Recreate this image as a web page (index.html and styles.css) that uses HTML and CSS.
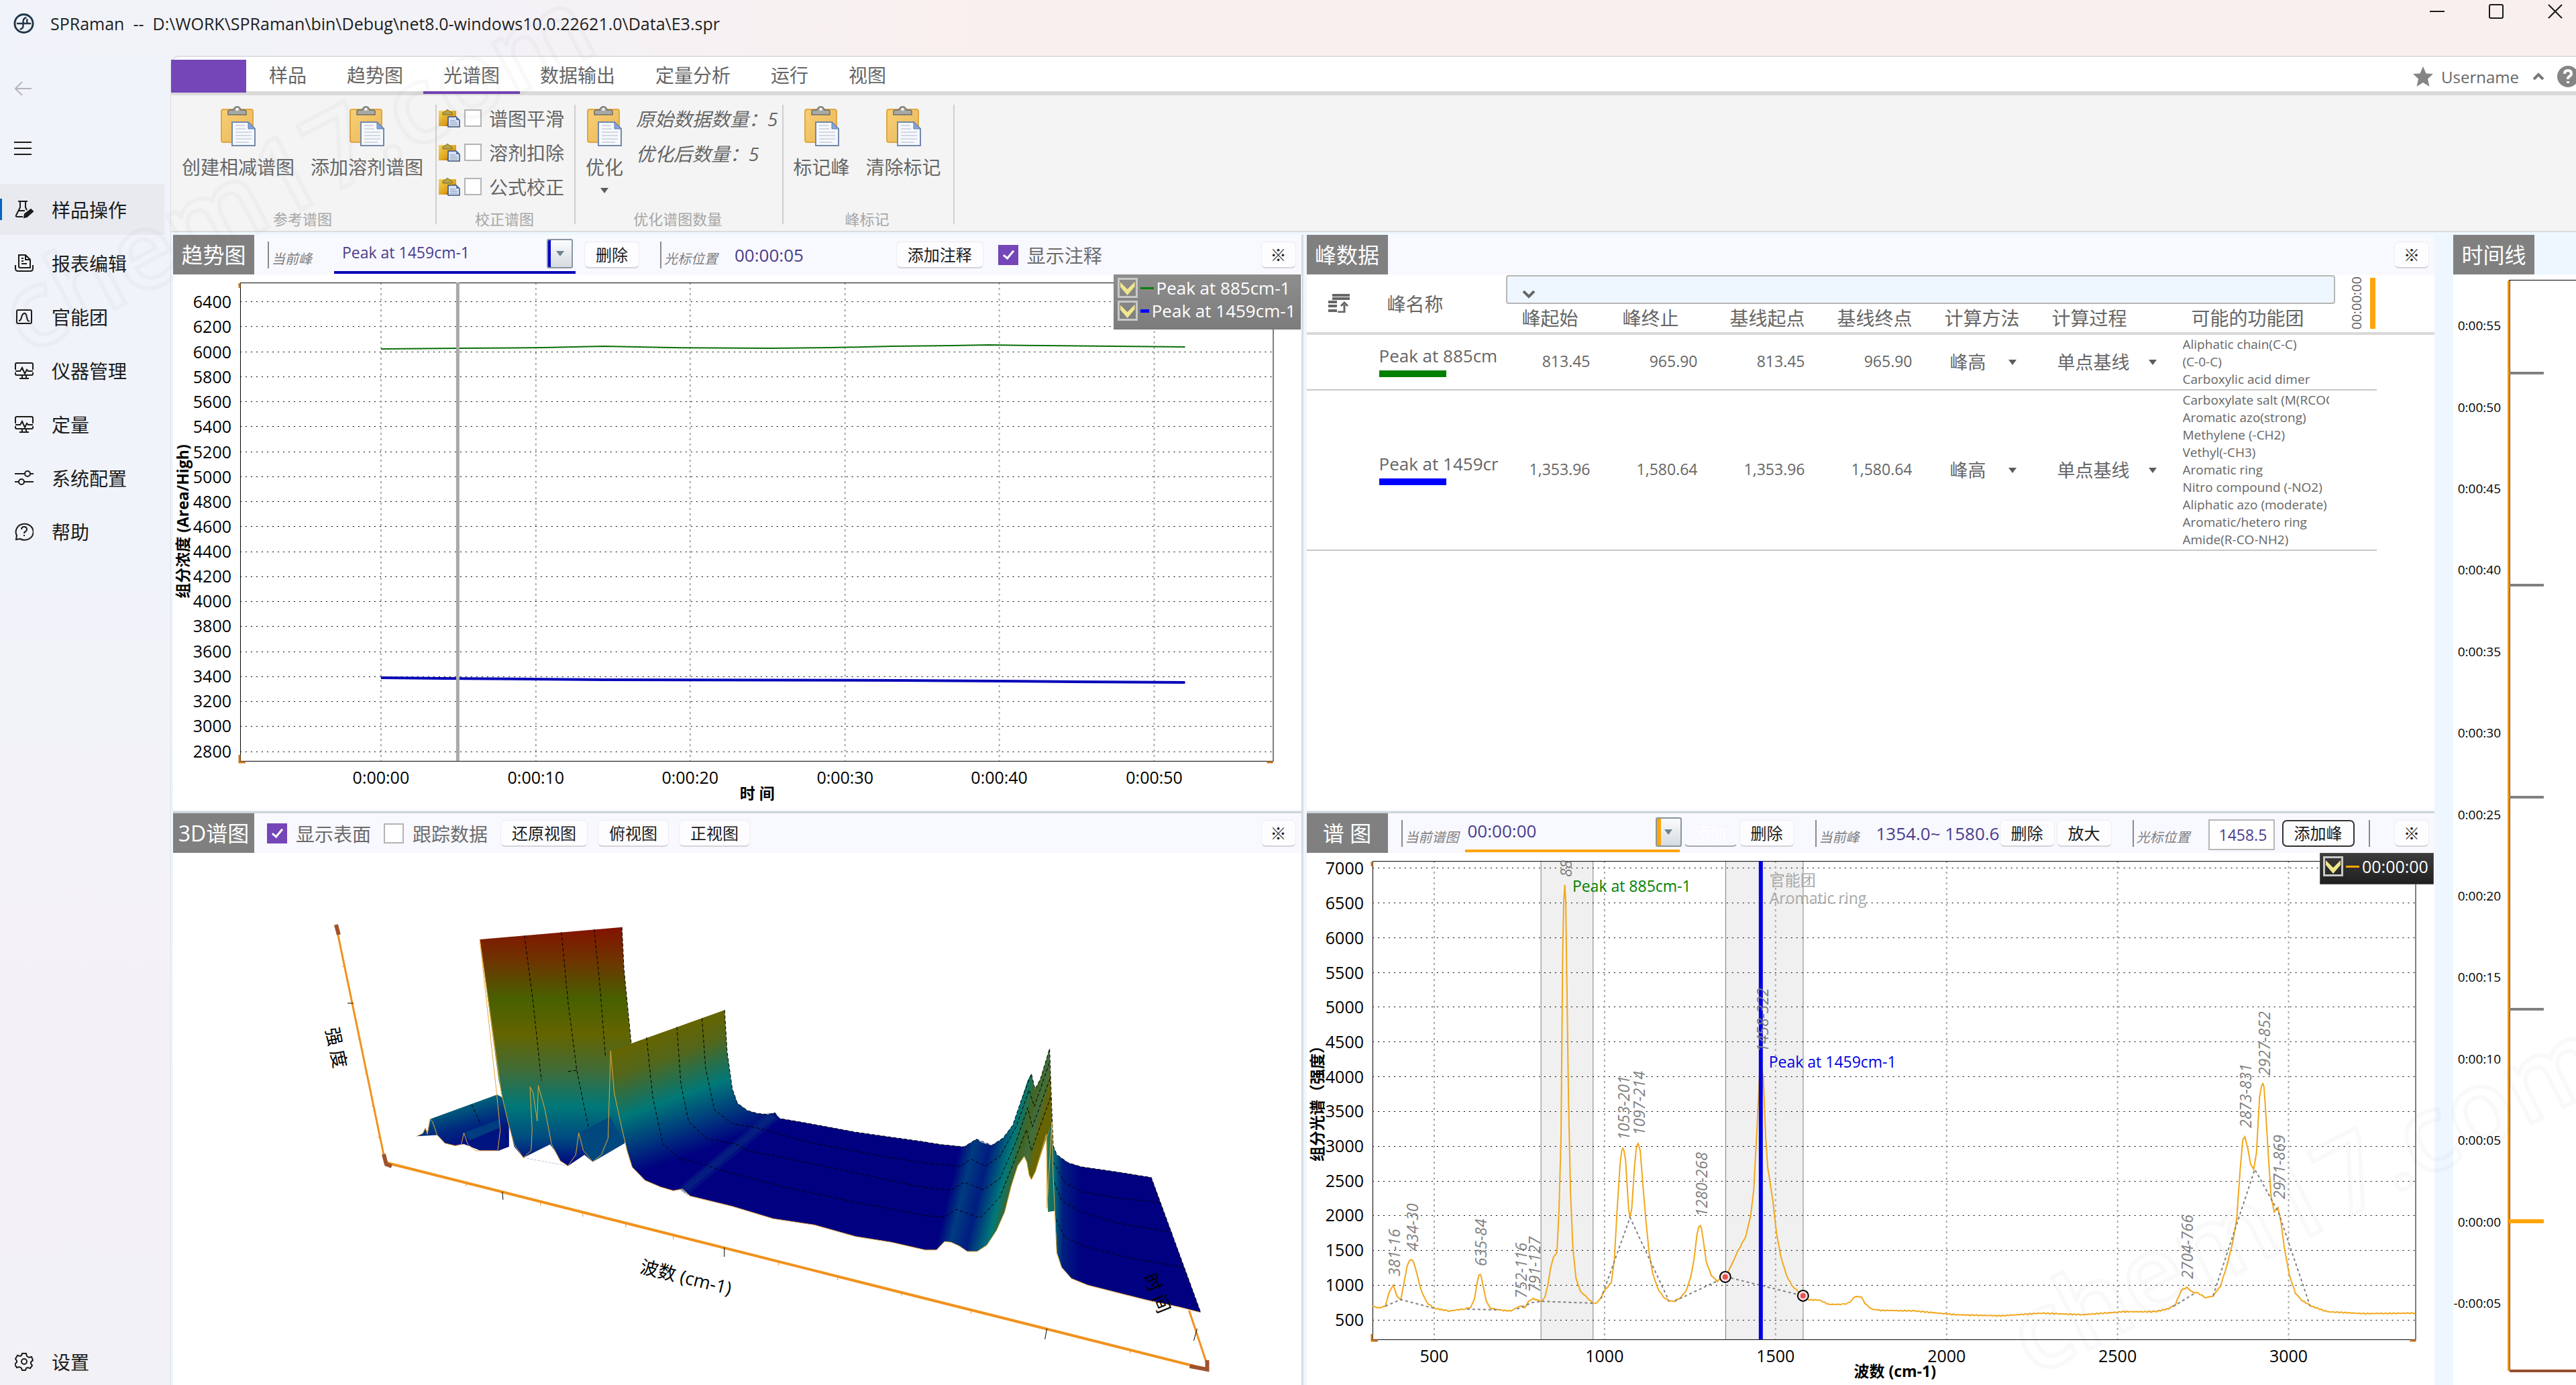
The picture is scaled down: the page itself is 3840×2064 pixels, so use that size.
FILE: index.html
```html
<!DOCTYPE html>
<html lang="zh-CN">
<head>
    <meta charset="UTF-8">
    <meta name="viewport" content="width=device-width, initial-scale=1.0">
    <title>SPRaman</title>
    <link rel="stylesheet" href="styles.css">
</head>
<body>
    <!-- 共用图标 -->
    <svg class="sprite" aria-hidden="true">
        <defs>
            <linearGradient id="boardFill" x1="0" y1="0" x2="1" y2="1">
                <stop offset="0" stop-color="#f9cf74"/>
                <stop offset="1" stop-color="#e9b75a"/>
            </linearGradient>
            <linearGradient id="boardGold" x1="0" y1="0" x2="1" y2="1">
                <stop offset="0" stop-color="#f5d35a"/>
                <stop offset=".6" stop-color="#e0a21a"/>
                <stop offset="1" stop-color="#5a3c08"/>
            </linearGradient>
        </defs>
        <symbol id="clipboard" viewBox="0 0 52 60">
            <rect x="1" y="5" width="47" height="49" rx="3" fill="url(#boardFill)" stroke="#e0a844" stroke-width="2"/>
            <path d="M11 13V8q0-2 3-2h5q1-5 5.500-5t5.500 5h5q3 0 3 2v5z" fill="#a9a9a4" stroke="#6f6f6b" stroke-width="1.500"/>
            <circle cx="24.500" cy="5" r="2" fill="#fff"/>
            <path d="M17 24h24l10 10v25H17z" fill="#f5f8fd" stroke="#7189ab" stroke-width="2"/>
            <path d="M41 24v10h10z" fill="#86a4d6" stroke="#5d7cb0"/>
            <path d="M22 29h14M22 34h15M22 39h24M22 44h24M22 49h24M22 54h20" stroke="#c9cdd8" stroke-width="1.500"/>
        </symbol>
        <symbol id="paste" viewBox="0 0 32 28">
            <rect x="0" y="3" width="26" height="23" fill="url(#boardGold)"/>
            <path d="M6 9V6l4-2q3-5 6 0l4 2v3z" fill="#b5a44a" stroke="#7c6a20"/>
            <path d="M14 12h12l5 5v10H14z" fill="#d6e2f4" stroke="#3d4f70" stroke-width="1.500"/>
            <path d="M26 12v5h5z" fill="#4f76bd"/>
            <path d="M17 18h8M17 21h11M17 24h11" stroke="#7f93b5"/>
        </symbol>
        <symbol id="monitor" viewBox="0 0 28 28">
            <path d="M1 13V5q0-2 2-2h22q2 0 2 2v8M1 17v2q0 2 2 2h22q2 0 2-2v-2M1 15h7l3-5 4 9 3-6 2 2h7M11 21v4M17 21v4M7 26h14"/>
        </symbol>
    </svg>

    <!-- 标题栏 -->
    <header class="titlebar">
        <svg class="app-icon" viewBox="0 0 32 32"><circle cx="16" cy="16" r="14" fill="none" stroke="#223548" stroke-width="3"/><path d="M20 7q-5 1-5 6v6q0 5-5 6M5 16h22M21 9v7" fill="none" stroke="#223548" stroke-width="2.500"/></svg>
        <span class="app-title">SPRaman&nbsp; --&nbsp; D:\WORK\SPRaman\bin\Debug\net8.0-windows10.0.22621.0\Data\E3.spr</span>
        <div class="window-buttons">
            <button type="button" aria-label="最小化"><svg viewBox="0 0 22 22"><path d="M0 11h22"/></svg></button>
            <button type="button" aria-label="最大化"><svg viewBox="0 0 22 22"><rect x="1" y="1" width="20" height="20" rx="2"/></svg></button>
            <button type="button" aria-label="关闭"><svg viewBox="0 0 22 22"><path d="M1 1l20 20M21 1L1 21"/></svg></button>
        </div>
    </header>

    <div class="shell">
        <!-- 左侧导航 -->
        <nav class="sidebar">
            <button type="button" class="side-button back" aria-label="返回"><svg viewBox="0 0 28 28"><path d="M26 14H2M12 4L2 14l10 10"/></svg></button>
            <button type="button" class="side-button menu" aria-label="菜单"><svg viewBox="0 0 28 28"><path d="M0 5h26M0 14h26M0 23h26"/></svg></button>
            <a href="#" class="nav-item active">
                <svg viewBox="0 0 28 28"><path d="M5 2h14M8 2v9L2 23q-1 2 2 2h8M16 2v9l2 4M6 16h9"/><path d="M14 26l1-5 9-7 3 3-9 8z" fill="#1b1b1b"/></svg>
                <span>样品操作</span>
            </a>
            <a href="#" class="nav-item">
                <svg viewBox="0 0 28 28"><path d="M6 2h10l7 7v12H8q-2 0-2-2zM16 2v7h7M1 17v5q0 4 4 4h18q4 0 4-4v-5M10 7h3M10 11h3M10 15h8"/></svg>
                <span>报表编辑</span>
            </a>
            <a href="#" class="nav-item">
                <svg viewBox="0 0 28 28"><rect x="3" y="4" width="22" height="20" rx="2"/><path d="M6 20q3 0 4-5t4-6 4 6 4 5"/></svg>
                <span>官能团</span>
            </a>
            <a href="#" class="nav-item"><svg viewBox="0 0 28 28"><use href="#monitor"/></svg><span>仪器管理</span></a>
            <a href="#" class="nav-item"><svg viewBox="0 0 28 28"><use href="#monitor"/></svg><span>定量</span></a>
            <a href="#" class="nav-item">
                <svg viewBox="0 0 28 28"><path d="M0 8h15M23 8h5M0 20h6M14 20h14"/><circle cx="19" cy="8" r="4"/><circle cx="10" cy="20" r="4"/></svg>
                <span>系统配置</span>
            </a>
            <a href="#" class="nav-item">
                <svg viewBox="0 0 28 28"><path d="M3 20A13 12 0 1 1 8 25l-6 1z"/><path d="M10 11q0-4 4-4t4 4q0 2-2 3t-2 3M14 19v2"/></svg>
                <span>帮助</span>
            </a>
            <a href="#" class="nav-item nav-bottom">
                <svg viewBox="0 0 28 28"><circle cx="14" cy="14" r="4"/><path d="M11 2h6l1 4 3 2 4-1 2 5-3 3v2l2 3-3 4-4-1-2 1-1 3h-5l-1-3-3-2-4 1-3-5 3-3v-2l-2-3 3-5 4 1 2-1z"/></svg>
                <span>设置</span>
            </a>
        </nav>

        <main class="main">
            <!-- 功能区标签 -->
            <div class="tabs">
                <button type="button" class="file-tab" aria-label="文件"></button>
                <button type="button" class="tab">样品</button>
                <button type="button" class="tab">趋势图</button>
                <button type="button" class="tab active">光谱图</button>
                <button type="button" class="tab">数据输出</button>
                <button type="button" class="tab">定量分析</button>
                <button type="button" class="tab">运行</button>
                <button type="button" class="tab">视图</button>
                <div class="account">
                    <svg class="star" viewBox="0 0 30 30"><path d="M15 0l4.500 10.500L30 11l-8 7.500L24.500 30 15 24l-9.500 6L8 18.500 0 11l10.500-.5z" fill="#858585"/></svg>
                    <span>Username</span>
                    <svg class="chevron" viewBox="0 0 16 12"><path d="M1 10l7-7 7 7" fill="none" stroke="#777" stroke-width="4"/></svg>
                    <svg class="help" viewBox="0 0 32 32"><circle cx="16" cy="16" r="16" fill="#858585"/><path d="M11 12q0-5 5-5t5 5q0 2-3 4-2 1-2 4M16 23v3" fill="none" stroke="#fff" stroke-width="4"/></svg>
                </div>
            </div>

            <!-- 功能区 -->
            <div class="ribbon">
                <section class="group">
                    <div class="group-body">
                        <button type="button" class="big-button"><svg><use href="#clipboard"/></svg>创建相减谱图</button>
                        <button type="button" class="big-button"><svg><use href="#clipboard"/></svg>添加溶剂谱图</button>
                    </div>
                    <h2>参考谱图</h2>
                </section>
                <section class="group">
                    <div class="group-body group-checks">
                        <label class="check-row"><svg><use href="#paste"/></svg><input type="checkbox">谱图平滑</label>
                        <label class="check-row"><svg><use href="#paste"/></svg><input type="checkbox">溶剂扣除</label>
                        <label class="check-row"><svg><use href="#paste"/></svg><input type="checkbox">公式校正</label>
                    </div>
                    <h2>校正谱图</h2>
                </section>
                <section class="group">
                    <div class="group-body">
                        <button type="button" class="big-button"><svg><use href="#clipboard"/></svg>优化<i class="caret"></i></button>
                        <div class="counts">
                            <p>原始数据数量<span class="colon">：</span>5</p>
                            <p>优化后数量<span class="colon">：</span>5</p>
                        </div>
                    </div>
                    <h2>优化谱图数量</h2>
                </section>
                <section class="group">
                    <div class="group-body">
                        <button type="button" class="big-button"><svg><use href="#clipboard"/></svg>标记峰</button>
                        <button type="button" class="big-button"><svg><use href="#clipboard"/></svg>清除标记</button>
                    </div>
                    <h2>峰标记</h2>
                </section>
            </div>

            <!-- 工作区 -->
            <div class="workspace">
                <div class="column">
                    <section class="pane pane-top">
                        <header class="pane-header">
                            <h3>趋势图</h3>
                            <label class="field" for="trendPeak">当前峰</label>
                            <div class="combo combo-blue">
                                <select id="trendPeak"><option>Peak at 1459cm-1</option><option>Peak at 885cm-1</option></select>
                                <span class="combo-arrow"><i class="caret"></i></span>
                            </div>
                            <button type="button" class="button">删除</button>
                            <span class="field">光标位置</span>
                            <span class="value">00:00:05</span>
                            <button type="button" class="button note-button">添加注释</button>
                            <label class="check"><input type="checkbox" checked>显示注释</label>
                            <button type="button" class="button close">※</button>
                        </header>
                        <div class="pane-body">
                            <svg id="trendChart" class="chart" viewBox="258 409 1682 798"></svg>
                            <div class="legend legend-gray">
                                <label><input type="checkbox" checked><i class="key key-green"></i>Peak at 885cm-1</label>
                                <label><input type="checkbox" checked><i class="key key-blue"></i>Peak at 1459cm-1</label>
                            </div>
                        </div>
                    </section>
                    <div class="split-h"></div>
                    <section class="pane pane-bottom">
                        <header class="pane-header">
                            <h3>3D谱图</h3>
                            <label class="check"><input type="checkbox" checked>显示表面</label>
                            <label class="check"><input type="checkbox">跟踪数据</label>
                            <div class="view-buttons">
                                <button type="button" class="button">还原视图</button>
                                <button type="button" class="button">俯视图</button>
                                <button type="button" class="button">正视图</button>
                            </div>
                            <button type="button" class="button close">※</button>
                        </header>
                        <div class="pane-body">
                            <svg id="surface" class="chart" viewBox="258 1271 1682 793">
                                <defs>
                                    <linearGradient id="wall" gradientUnits="userSpaceOnUse" x1="0" y1="458" x2="0" y2="1037">
                                        <stop offset="0" stop-color="#841200"/><stop offset=".14" stop-color="#6e3400"/>
                                        <stop offset=".3" stop-color="#486000"/><stop offset=".45" stop-color="#646400"/>
                                        <stop offset=".6" stop-color="#406c38"/><stop offset=".75" stop-color="#007878"/>
                                        <stop offset=".88" stop-color="#004c80"/><stop offset="1" stop-color="#000480"/>
                                    </linearGradient>
                                    <linearGradient id="foot" gradientUnits="userSpaceOnUse" x1="560" y1="880" x2="600" y2="1000">
                                        <stop offset="0" stop-color="#007078"/><stop offset=".5" stop-color="#002a80"/><stop offset="1" stop-color="#000080"/>
                                    </linearGradient>
                                    <linearGradient id="ridge" gradientUnits="userSpaceOnUse" x1="863" y1="758" x2="985" y2="1032">
                                        <stop offset="0" stop-color="#666400"/><stop offset=".2" stop-color="#54661a"/>
                                        <stop offset=".52" stop-color="#007878"/><stop offset=".98" stop-color="#000080"/>
                                    </linearGradient>
                                    <linearGradient id="peaks" gradientUnits="userSpaceOnUse" x1="455" y1="1000" x2="687" y2="1062">
                                        <stop offset="0" stop-color="#000080"/><stop offset=".17" stop-color="#003c80"/>
                                        <stop offset=".38" stop-color="#001c80"/><stop offset=".64" stop-color="#007878"/>
                                        <stop offset=".78" stop-color="#466420"/><stop offset=".86" stop-color="#3f6e40"/><stop offset=".97" stop-color="#686400"/>
                                    </linearGradient>
                                    <linearGradient id="tail" gradientUnits="userSpaceOnUse" x1="745" y1="0" x2="850" y2="0">
                                        <stop offset="0" stop-color="#287850"/><stop offset=".22" stop-color="#006c78"/>
                                        <stop offset=".45" stop-color="#002080"/><stop offset="1" stop-color="#000080"/>
                                    </linearGradient>
                                </defs>
                                <!-- 坐标轴 -->
                                <g class="axis3d">
                                    <path d="M501 1379L575 1735" stroke-width="3"/>
                                    <path d="M577 1733L1200 1890L1801 2041" stroke-width="4"/>
                                    <path d="M1773 1953L1801 2037" stroke-width="3"/>
                                    <path d="M514 1440h-4M538 1549h-4M548 1600h-4M558 1648h-4M567 1695h-4M695 1763v5M806 1792v5M869 1808v5M933 1824v5M1004 1842v5M1161 1881v5M1249 1903v5M1344 1926v5M1448 1953v5M1685 2012v5" stroke-width="1"/>
                                </g>
                                <path class="caps" d="M501 1378l4 15M572 1720l4 15 8 3M1774 2036l26 5 0-14"/>
                                <path class="ticks" d="M518 1495h9M749 1776l1 12M1080 1859v14M1561 1980l-3 16M1785 1980l-5 18"/>
                                <!-- 曲面左半部分 -->
                                <g transform="translate(250 1100) scale(.7653 .6148)">
                                    <path d="M485 965L497 958 502 945 506 955 512 923 642 864 665 880 665 990 645 1000 610 1000 590 990 577 984 560 988 540 982 525 962z" fill="url(#foot)"/>
                                    <path d="M577 957L646 924 665 985 645 1000 610 1000 590 990z" fill="#001480"/>
                                    <path d="M577 957L646 924V945L588 975z" fill="#003c80"/>
                                    <path d="M608 488L885 458 889 560 903 738V800L890 985 828 1027 780 1037 693 1017 675 990 663 930 645 830z" fill="url(#wall)"/>
                                    <path d="M693 1017L745 985 760 1010 780 1037z" fill="#fff"/>
                                    <path d="M722 842L862 773V918L801 957 795 1010 780 1037 765 1025 748 985z" fill="url(#wall)"/>
                                    <path d="M780 1037L812 1010 828 1027 890 982 902 1040 840 1040z" fill="#fff"/>
                                    <path d="M801 957L862 918 890 982 828 1027 815 1010z" fill="#00487e"/>
                                    <path d="M863 758L1085 659 1090 760 1100 850 1110 885 1130 903 1150 910 1170 912 1183 908 1192 922 1240 932 1340 955 1477 979V1241L1410 1222 1340 1208 1260 1180 1180 1165 1100 1135 1018 1110 1003 1093 985 1097 960 1088 930 1072 905 1040 895 1000 882 930 870 860z" fill="url(#ridge)"/>
                                    <g fill="none" stroke="#0a3a80">
                                        <path d="M1003 1100L1180 916" stroke-width="26" opacity=".25"/>
                                        <path d="M1003 1098L1181 914" stroke-width="14" opacity=".3"/>
                                    </g>
                                    <g class="contour">
                                        <path d="M695 478L712 640 728 830M767 470L780 640 797 805 820 945M831 463L842 600 853 775M780 808L797 805M592 888L610 936M885 458L889 560 903 738"/>
                                        <path d="M933 725L945 870 965 985 1000 1020 1050 1035 1070 1045 1200 1088 1340 1125 1477 1157"/>
                                        <path d="M992 700L1000 840 1015 930 1050 970 1110 985 1130 1000 1250 1030 1400 1070 1477 1090"/>
                                        <path d="M1041 679L1048 800 1065 900 1100 935 1150 945 1250 980 1400 1015 1477 1030"/>
                                        <path d="M1085 659L1090 760 1100 850 1110 885 1130 903 1150 910 1170 912 1183 908 1192 922 1240 932 1340 955 1477 979"/>
                                    </g>
                                    <path class="front" d="M485 965L497 958 502 945 506 960 511 923 516 930 525 962 540 982 560 988 572 985 577 957 585 985 600 1000 643 1000 648 950 640 850 608 488 650 860 663 930 675 985 693 1017 708 1000 710 950 706 845 712 860 720 928 722 842 735 900 748 985 765 1025 780 1037 795 1010 801 957 810 1000 828 1027 845 1010 858 970 863 758 870 860 882 930 895 1000 905 1040 930 1072 960 1088 985 1097 1003 1093 1018 1110 1100 1135 1180 1165 1260 1180 1340 1208 1410 1222 1477 1241"/>
                                </g>
                                <!-- 曲面右半部分 -->
                                <g transform="translate(1200 1200) scale(.4847 .551)">
                                    <path d="M370 911L420 918 490 924 515 910 528 903 545 912 575 920 610 900 640 865 665 800 685 745 697 726 708 768 725 740 753 658 761 860 743 900 710 990 697 1013 690 1000 683 965 675 950 655 975 635 1030 615 1100 590 1150 560 1190 530 1207 500 1207 475 1192 450 1182 430 1180 405 1203 370 1203z" fill="url(#peaks)"/>
                                    <path d="M761 857L764 920 775 945 810 967 850 978 960 992 1066 1007 1218 1372 1150 1357 1050 1338 960 1318 870 1298 820 1280 790 1250 775 1210 770 1097 748 1100 744 900z" fill="url(#tail)"/>
                                    <g class="contour">
                                        <path d="M370 911L420 918 490 924 528 903 575 920 610 900 640 865 665 800 697 726 708 768 725 740 753 658 758 780 764 920 775 945 810 967 850 978 960 992 1066 1007 1218 1372"/>
                                        <path d="M370 968L480 977 510 957 555 976 600 950 650 870 690 770 706 815 753 695M764 965L800 1020 850 1045 960 1062 1093 1075"/>
                                        <path d="M370 1035L450 1041 490 1020 550 1040 600 1010 650 910 686 818 700 870 754 740M768 1020L790 1070 850 1100 960 1130 1130 1155"/>
                                        <path d="M370 1110L430 1114 465 1093 540 1116 600 1060 650 950 682 877 697 935 756 790M773 1120L800 1170 870 1195 1000 1225 1168 1250"/>
                                    </g>
                                    <path class="front" d="M370 1203L405 1203 430 1180 450 1182 475 1192 500 1207 530 1207 560 1190 590 1150 615 1100 635 1030 655 975 675 950 683 965 690 1000 697 1013 710 990 743 890 745 1090 760 857 764 1000 770 1120 775 1210 790 1250 820 1280 870 1298 960 1318 1050 1338 1150 1357 1218 1372"/>
                                </g>
                                <text class="label3d" transform="translate(502 1561) rotate(78)">强 度</text>
                                <text class="label3d" transform="translate(1023 1903) rotate(14)">波数 (cm-1)</text>
                                <text class="label3d" transform="translate(1726 1927) rotate(68)">时 间</text>
                            </svg>
                        </div>
                    </section>
                </div>

                <div class="split-v"></div>

                <div class="column">
                    <section class="pane pane-top">
                        <header class="pane-header">
                            <h3>峰数据</h3>
                            <button type="button" class="button close">※</button>
                        </header>
                        <div class="pane-body">
                            <table class="peaks">
                                <colgroup>
                                    <col class="c-mark"><col class="c-name"><col class="c-num"><col class="c-num"><col class="c-num"><col class="c-num"><col class="c-num"><col class="c-process"><col class="c-group"><col class="c-time"><col>
                                </colgroup>
                                <thead>
                                    <tr class="filter-row">
                                        <th rowspan="2"><svg class="sort-icon" viewBox="0 0 32 28"><path d="M6 2h26M6 7h26M0 12h13M0 18h13M0 25h13" stroke="#666" stroke-width="4"/><path d="M14 27h10V16M19 18l5-5 5 5" fill="none" stroke="#666" stroke-width="3"/></svg></th>
                                        <th rowspan="2" class="name-head">峰名称</th>
                                        <th colspan="7"><button type="button" class="filter-box" aria-label="筛选"><svg viewBox="0 0 20 12"><path d="M2 1l8 8 8-8" fill="none" stroke="#666" stroke-width="4"/></svg></button></th>
                                        <th rowspan="2"><div class="time-head"><span>00:00:00</span></div></th>
                                        <th rowspan="2"></th>
                                    </tr>
                                    <tr class="head-row">
                                        <th class="first">峰起始</th><th>峰终止</th><th>基线起点</th><th>基线终点</th><th>计算方法</th><th>计算过程</th><th class="group-head">可能的功能团</th>
                                    </tr>
                                </thead>
                                <tbody>
                                    <tr>
                                        <td></td>
                                        <td class="name"><span>Peak at 885cm-1</span><i class="swatch key-green"></i></td>
                                        <td class="num">813.45</td><td class="num">965.90</td><td class="num">813.45</td><td class="num">965.90</td>
                                        <td><div class="pick"><select aria-label="计算方法"><option>峰高</option></select><i class="caret"></i></div></td>
                                        <td><div class="pick pick-wide"><select aria-label="计算过程"><option>单点基线</option></select><i class="caret"></i></div></td>
                                        <td class="groups"><div>Aliphatic chain(C-C)<br>(C-0-C)<br>Carboxylic acid dimer</div></td>
                                        <td></td><td class="rest"></td>
                                    </tr>
                                    <tr>
                                        <td></td>
                                        <td class="name"><span>Peak at 1459cm-1</span><i class="swatch key-blue"></i></td>
                                        <td class="num">1,353.96</td><td class="num">1,580.64</td><td class="num">1,353.96</td><td class="num">1,580.64</td>
                                        <td><div class="pick"><select aria-label="计算方法"><option>峰高</option></select><i class="caret"></i></div></td>
                                        <td><div class="pick pick-wide"><select aria-label="计算过程"><option>单点基线</option></select><i class="caret"></i></div></td>
                                        <td class="groups"><div>Carboxylate salt (M(RCOO)<br>Aromatic azo(strong)<br>Methylene (-CH2)<br>Vethyl(-CH3)<br>Aromatic ring<br>Nitro compound (-NO2)<br>Aliphatic azo (moderate)<br>Aromatic/hetero ring<br>Amide(R-CO-NH2)</div></td>
                                        <td></td><td class="rest"></td>
                                    </tr>
                                </tbody>
                            </table>
                        </div>
                    </section>
                    <div class="split-h"></div>
                    <section class="pane pane-bottom">
                        <header class="pane-header">
                            <h3>谱 图</h3>
                            <label class="field" for="spectrum">当前谱图</label>
                            <div class="combo combo-orange">
                                <select id="spectrum"><option>00:00:00</option></select>
                                <span class="combo-arrow"><i class="caret"></i></span>
                            </div>
                            <button type="button" class="button ghost" disabled>添加</button>
                            <button type="button" class="button ghost-next">删除</button>
                            <span class="field">当前峰</span>
                            <span class="value range">1354.0~ 1580.6</span>
                            <button type="button" class="button tight">删除</button>
                            <button type="button" class="button tight">放大</button>
                            <label class="field" for="cursorPos">光标位置</label>
                            <input type="text" id="cursorPos" class="text-box" value="1458.5">
                            <button type="button" class="button add-peak">添加峰</button>
                            <span class="field field-end"></span>
                            <button type="button" class="button close">※</button>
                        </header>
                        <div class="pane-body">
                            <svg id="spectrumChart" class="chart" viewBox="1948 1271 1682 793"></svg>
                            <div class="legend legend-dark">
                                <label><input type="checkbox" checked><i class="key key-orange"></i>00:00:00</label>
                            </div>
                        </div>
                    </section>
                </div>

                <section class="pane timeline">
                    <header class="pane-header"><h3>时间线</h3></header>
                    <div class="pane-body">
                        <svg id="timeline" class="chart" viewBox="3657 409 183 1655"></svg>
                    </div>
                </section>
            </div>
        </main>
    </div>

    <!-- 水印 -->
    <svg class="watermark" viewBox="0 0 3840 2064" aria-hidden="true">
        <text transform="translate(40 530) rotate(-28)">chem17.com</text>
        <text transform="translate(3032 2052) rotate(-27)">chem17.com</text>
    </svg>

    <script src="script.js"></script>
</body>
</html>
```
FILE: styles.css
```css
* {
    margin: 0;
    padding: 0;
    box-sizing: border-box;
}

html,
body {
    height: 100%;
}

body {
    display: flex;
    flex-direction: column;
    overflow: hidden;
    background: linear-gradient(to right, #f0f3f9 0%, #f3f2f7 18%, #f9f0ee 38%);
    font-family: "Open Sans", "Noto Sans CJK SC", sans-serif;
    font-size: 28px;
    color: #666;
}

button,
input,
select {
    font: inherit;
    color: inherit;
    border: none;
    background: none;
}

select {
    appearance: none;
}

.sprite {
    position: absolute;
    width: 0;
    height: 0;
}

/* 标题栏 */
.titlebar {
    display: flex;
    flex: none;
    height: 83px;
    padding: 0 20px 0 20px;
    color: #1f1f1f;
    font-size: 25px;
}

.app-icon {
    width: 31px;
    height: 32px;
    margin: 19px 24px 0 0;
}

.app-title {
    line-height: 70px;
}

.window-buttons {
    display: flex;
    gap: 66px;
    margin-left: auto;
    padding-top: 6px;
}

.window-buttons button {
    width: 22px;
    height: 22px;
}

.window-buttons svg {
    display: block;
    fill: none;
    stroke: #1a1a1a;
    stroke-width: 2;
}

/* 左侧导航 */
.shell {
    display: flex;
    flex: 1;
    min-height: 0;
}

.sidebar {
    display: flex;
    flex-direction: column;
    flex: none;
    width: 254px;
    padding-top: 9px;
    background: linear-gradient(#f0f3f9, #f0f3f9 40%, #f4f1f6 70%, #f2f1f6);
}

.sidebar svg {
    width: 28px;
    height: 28px;
    fill: none;
    stroke: #1b1b1b;
    stroke-width: 2;
}

.side-button {
    height: 80px;
    padding-left: 21px;
    text-align: left;
}

.side-button svg {
    display: block;
}

.side-button.back svg {
    stroke: #b4b6bb;
}

.side-button.menu {
    margin: 9px 0 13px;
}

.nav-item {
    display: flex;
    align-items: center;
    gap: 27px;
    width: 245px;
    height: 76px;
    margin-bottom: 4px;
    padding-left: 22px;
    color: #1b1b1b;
    text-decoration: none;
}

.nav-item.active {
    position: relative;
    background: #e8eaf0;
}

.nav-item.active::before {
    content: "";
    position: absolute;
    left: 0;
    top: 22px;
    width: 3px;
    height: 32px;
    background: #0067c0;
}

.nav-bottom {
    height: 70px;
    margin: auto 0 0;
}

.main {
    display: flex;
    flex-direction: column;
    flex: 1;
    min-width: 0;
    border-left: 1px solid #dcdfe4;
    border-top: 2px solid #dfdfe3;
    border-top-left-radius: 14px;
    background: #fff;
}

/* 功能区标签 */
.tabs {
    display: flex;
    flex: none;
    height: 57px;
    border-bottom: 6px solid #dadada;
}

.file-tab {
    width: 112px;
    height: 49px;
    margin: 4px 4px 0 0;
    background: #7446b8;
    z-index: 1;
}

.tab {
    height: 55px;
    padding: 0 30px;
    line-height: 55px;
    border-bottom: 4px solid transparent;
}

.tab.active {
    border-bottom-color: #6f42b0;
}

.account {
    display: flex;
    align-items: center;
    margin-left: auto;
    margin-right: -4px;
    padding-top: 7px;
    font-size: 24px;
}

.account .star {
    width: 30px;
    height: 30px;
    margin-right: 12px;
}

.account .chevron {
    width: 16px;
    height: 12px;
    margin: 0 20px 0 21px;
}

.account .help {
    width: 32px;
    height: 32px;
}

/* 功能区 */
.ribbon {
    display: flex;
    flex: none;
    height: 204px;
    padding-top: 14px;
    background: #f4f4f4;
    border-bottom: 2px solid #dadce0;
}

.group {
    display: flex;
    flex-direction: column;
    height: 178px;
    padding: 0 6px 0 3px;
    border-right: 2px solid #cfcfcf;
}

.group:first-child {
    padding-left: 4px;
}

.group-body {
    display: flex;
    flex: 1;
}

.group h2 {
    color: #a6a6a6;
    font-size: 22px;
    font-weight: normal;
    line-height: 24px;
    height: 20px;
    text-align: center;
}

.big-button {
    display: flex;
    flex-direction: column;
    align-items: center;
    padding: 2px 12px 0;
    line-height: 62px;
}

.big-button svg {
    width: 52px;
    height: 60px;
    flex: none;
}

.caret {
    display: inline-block;
    flex: none;
    width: 0;
    height: 0;
    border: 6px solid transparent;
    border-top: 8px solid #5c5c5c;
    border-bottom: none;
}

.group-checks {
    flex-direction: column;
    padding-right: 9px;
}

.check-row {
    display: flex;
    align-items: center;
    height: 51px;
    padding-bottom: 12px;
}

.check-row svg {
    width: 32px;
    height: 28px;
    margin-right: 6px;
}

.check-row input {
    appearance: none;
    width: 26px;
    height: 26px;
    margin-right: 11px;
    border: 2px solid #b4b4b4;
    background: #fff;
}

.counts {
    padding-left: 7px;
    font-style: italic;
    line-height: 51px;
    margin-top: -5px;
}

.colon {
    font-family: "Noto Sans CJK TC", sans-serif;
}

/* 工作区 */
.workspace {
    display: flex;
    flex: 1;
    min-height: 0;
    padding: 4px 0 0 3px;
    background: #eef7ff;
}

.column {
    display: flex;
    flex-direction: column;
    flex: 1;
    min-width: 0;
}

.split-v {
    flex: none;
    width: 8px;
    border-left: 3px solid #d8dbdf;
}

.split-h {
    flex: none;
    height: 5px;
    border-bottom: 3px solid #ced3d6;
}

.pane {
    display: flex;
    flex-direction: column;
    min-width: 0;
    min-height: 0;
}

.pane-top {
    flex: 857 1 0;
}

.pane-bottom {
    flex: 852 1 0;
}

.timeline {
    flex: none;
    width: 211px;
    padding-left: 28px;
}

.timeline .pane-header {
    background: #eef7ff;
}

.pane-header {
    display: flex;
    align-items: center;
    flex: none;
    height: 59px;
    background: #f8f8ff;
}

.pane-header h3 {
    flex: none;
    width: 121px;
    height: 59px;
    background: #808080;
    color: #fff;
    font-size: 32px;
    font-weight: normal;
    line-height: 59px;
    text-align: center;
}

.pane-body {
    position: relative;
    flex: 1;
    min-height: 0;
    overflow: hidden;
    background: #fff;
}

.chart {
    display: block;
    width: 100%;
    height: 100%;
}

.field {
    flex: none;
    height: 40px;
    margin-left: 20px;
    padding-left: 4px;
    border-left: 2px solid #8a8a8a;
    color: #808080;
    font-size: 20px;
    font-style: italic;
    line-height: 52px;
    white-space: nowrap;
}

.button + .field {
    margin-left: 31px;
}

.value {
    flex: none;
    margin-left: 25px;
    color: #483d8b;
    font-size: 26px;
    white-space: nowrap;
}

.button {
    flex: none;
    height: 40px;
    padding: 0 16px;
    border: 1px solid #ececf2;
    border-bottom: 2px solid #d4d4da;
    border-radius: 7px;
    background: #fdfdff;
    color: #1b1b1b;
    font-size: 24px;
    line-height: 38px;
    white-space: nowrap;
}

.button.close {
    width: 52px;
    margin: 0 8px 0 auto;
    padding: 0;
}

.note-button {
    margin: 0 22px 0 138px;
}

/* 下拉框 */
.combo {
    display: flex;
    flex: none;
    height: 52px;
    margin-top: 4px;
    border-bottom: 4px solid #0000b8;
}

.combo select {
    flex: 1;
    padding: 0 0 8px 12px;
    color: #483d8b;
    font-size: 23px;
}

.combo .caret {
    border-top-color: #6c8490;
}

.combo-blue {
    width: 360px;
    margin-left: 33px;
    margin-right: 13px;
}

.combo-orange {
    width: 320px;
    margin-left: 9px;
    border-bottom-color: #ffa50a;
}

.combo-orange select {
    padding-left: 4px;
    font-size: 26px;
}

.combo-arrow {
    display: flex;
    align-items: center;
    justify-content: center;
    width: 39px;
    height: 44px;
    margin-right: 4px;
    border: 2px solid #8796a0;
    border-radius: 3px;
    background: linear-gradient(#fbfcfd, #d5dbe0);
    box-shadow: inset 4px 0 #0000c8;
}

.combo-orange .combo-arrow {
    margin-right: -3px;
    box-shadow: inset 6px 0 #ffa50a;
}

/* 复选框 */
.check {
    display: flex;
    align-items: center;
    margin-left: 19px;
    color: #6c6c6c;
}

.note-button + .check {
    margin-left: 0;
}

.check input {
    position: relative;
    appearance: none;
    width: 30px;
    height: 30px;
    margin-right: 13px;
    border: 2px solid #b4b4b4;
    background: #fff;
}

.check input:checked {
    border-color: #7446b8;
    background: #7446b8;
}

.check input:checked::after {
    content: "";
    position: absolute;
    left: 9px;
    top: 3px;
    width: 6px;
    height: 13px;
    border: solid #fff;
    border-width: 0 3px 3px 0;
    transform: rotate(40deg);
}

.view-buttons {
    display: flex;
    gap: 15px;
    margin-left: 19px;
}

/* 谱图工具栏 */
.ghost {
    width: 80px;
    margin-left: 6px;
    padding: 0;
    border-color: #f8f8ff;
    border-bottom-color: #a8a8b0;
    background: none;
    color: #fff;
}

.ghost-next {
    margin-left: 3px;
}

.range {
    width: 184px;
}

.tight {
    margin-right: 3px;
}

.tight + .field {
    margin-left: 28px;
}

.text-box {
    width: 99px;
    height: 46px;
    margin: 4px 11px 0 27px;
    padding-left: 14px;
    border: 2px solid #b8b8b8;
    background: #fff;
    color: #483d8b;
    font-size: 23px;
}

.add-peak {
    border: 2px solid #333;
    line-height: 36px;
}

.button + .field-end {
    margin-left: 21px;
}

/* 图例 */
.legend {
    position: absolute;
    top: 0;
    right: 1px;
    padding: 3px 6px 10px;
    color: #fff;
    font-size: 26px;
}

.legend label {
    display: flex;
    align-items: center;
    height: 34px;
    white-space: nowrap;
}

.legend-gray {
    width: 279px;
    background: linear-gradient(#8e8e8e, #7c7c7c);
    border: solid #707070;
    border-width: 0 1px 1px 0;
}

.legend-dark {
    width: 170px;
    padding: 2px 4px 9px;
    background: linear-gradient(#3c3c3c, #202020);
    border: 1px solid #555;
    font-size: 25px;
}

.legend input {
    flex: none;
    position: relative;
    appearance: none;
    width: 30px;
    height: 30px;
    border: 3px solid #c8c8c8;
}

.legend input:checked::after {
    content: "";
    position: absolute;
    left: 1px;
    top: 3px;
    width: 22px;
    height: 20px;
    background: #f0e68c;
    clip-path: polygon(0 0, 50% 55%, 100% 0, 100% 35%, 50% 100%, 0 35%);
}

.key {
    width: 20px;
    height: 3px;
    margin: 0 4px;
}

.legend .key-blue {
    height: 5px;
}

.key-green {
    background: #008000;
}

.key-blue {
    background: #0000ff;
}

.key-orange {
    background: #ffa500;
}

/* 峰数据表 */
.peaks {
    width: 100%;
    border-collapse: collapse;
    table-layout: fixed;
}

.peaks th {
    font-weight: normal;
    text-align: left;
}

.c-mark {
    width: 108px;
}

.c-name {
    width: 193px;
}

.c-num {
    width: 160px;
}

.c-process {
    width: 200px;
}

.c-group {
    width: 230px;
}

.c-time {
    width: 64px;
}

.filter-row {
    height: 44px;
}

.head-row {
    height: 44px;
}

.peaks thead {
    border-bottom: 4px solid #d9d9d9;
}

.head-row th {
    padding-left: 10px;
    line-height: 40px;
}

.head-row .first {
    padding-left: 20px;
}

.head-row .group-head {
    padding-left: 18px;
}

.name-head {
    padding-left: 12px;
}

.sort-icon {
    display: block;
    width: 32px;
    height: 28px;
    margin-left: 32px;
}

.filter-box {
    display: flex;
    align-items: flex-end;
    width: calc(100% + 6px);
    height: 43px;
    margin-left: -4px;
    padding: 0 0 6px 22px;
    border: 2px solid #b6b6b6;
    border-radius: 4px;
    background: #eef6ff;
}

.filter-box svg {
    width: 20px;
    height: 12px;
}

.time-head {
    display: flex;
    align-items: center;
    height: 76px;
    margin-left: 20px;
    margin-right: 2px;
    border-right: 8px solid #ffa50a;
}

.time-head span {
    font-size: 20px;
    line-height: 28px;
    writing-mode: vertical-rl;
    transform: rotate(180deg);
}

.peaks tbody td:not(.rest) {
    border-bottom: 2px solid #c8c8c8;
}

.name {
    padding-bottom: 5px;
    font-size: 26px;
    line-height: 36px;
}

.name span {
    display: block;
    width: 177px;
    overflow: hidden;
    white-space: nowrap;
}

.swatch {
    display: block;
    width: 100px;
    height: 10px;
    margin-top: 4px;
}

.num {
    padding-right: 38px;
    padding-bottom: 4px;
    font-size: 23px;
    text-align: right;
}

.pick {
    display: flex;
    align-items: center;
    width: 117px;
    padding-left: 18px;
}

.pick-wide {
    width: 166px;
}

.pick select {
    flex: 1;
    font-size: 27px;
}

.groups {
    padding: 1px 0 2px 5px;
    font-size: 19px;
    line-height: 26px;
}

.groups div {
    width: 218px;
    overflow: hidden;
    white-space: nowrap;
}

/* 图表 */
.chart text {
    fill: #000;
    font-size: 25px;
    dominant-baseline: central;
}

.chart .end {
    text-anchor: end;
}

.chart .mid {
    text-anchor: middle;
}

.chart .axis-title {
    font-size: 23px;
    font-weight: bold;
    text-anchor: middle;
}

.grid-h {
    stroke: #000;
    stroke-width: 1;
    stroke-dasharray: 2 6;
}

.grid-v {
    stroke: #a8a8a8;
    stroke-width: 2;
    stroke-dasharray: 3 5;
}

.frame {
    fill: none;
    stroke: #000;
    stroke-width: 1;
}

.corner {
    fill: none;
    stroke: #c87820;
    stroke-width: 3;
}

.band {
    fill: #f0f0f0;
}

.band-edge {
    stroke: #808080;
    stroke-width: 1;
}

.curve {
    fill: none;
    stroke: #f2a81c;
    stroke-width: 2;
}

.baseline {
    fill: none;
    stroke: #808080;
    stroke-width: 2;
    stroke-dasharray: 4 4;
}

.chart .peak-label {
    fill: #808080;
    font-size: 23px;
    font-style: italic;
}

.chart .note {
    font-size: 23px;
}

.chart .time-label {
    font-size: 19px;
    text-anchor: end;
}

.axis3d path {
    fill: none;
    stroke: #f0921c;
}

.caps {
    fill: none;
    stroke: #a0522d;
    stroke-width: 6;
}

.ticks {
    fill: none;
    stroke: #000;
    stroke-width: 1;
}

.contour path {
    fill: none;
    stroke: #000;
    stroke-width: 1;
    stroke-dasharray: 5 3;
    vector-effect: non-scaling-stroke;
}

.front {
    fill: none;
    stroke: #e8a838;
    stroke-width: 1;
    vector-effect: non-scaling-stroke;
}

.chart .label3d {
    font-size: 27px;
    text-anchor: middle;
}

/* 水印 */
.watermark {
    position: absolute;
    inset: 0;
    width: 100%;
    height: 100%;
    pointer-events: none;
}

.watermark text {
    fill: none;
    stroke: #606060;
    stroke-opacity: 0.04;
    stroke-width: 6;
    font-size: 158px;
    font-weight: 600;
}
```
FILE: script.js
```js
const NS = 'http://www.w3.org/2000/svg';

function add(parent, tag, attrs, text) {
    const el = document.createElementNS(NS, tag);
    for (const key in attrs) el.setAttribute(key, attrs[key]);
    if (text !== undefined) el.textContent = text;
    parent.appendChild(el);
    return el;
}

function line(parent, cls, x1, y1, x2, y2) {
    return add(parent, 'line', { class: cls, x1, y1, x2, y2 });
}

// 趋势图
function drawTrend() {
    const svg = document.getElementById('trendChart');
    const left = 358, right = 1898, top = 421, bottom = 1134;

    for (let v = 2800; v <= 6400; v += 200) {
        const y = Math.round(1119.5 - (v - 2800) * 0.1862) + 0.5;
        line(svg, 'grid-h', left, y, right, y);
        add(svg, 'text', { class: 'end', x: 345, y: y - 1 }, v);
    }
    for (let i = 0; i <= 5; i++) {
        const x = Math.round(568 + i * 230.6);
        line(svg, 'grid-v', x, top, x, bottom);
        add(svg, 'text', { class: 'mid', x, y: 1158 }, '0:00:' + i + '0');
    }
    add(svg, 'rect', { class: 'frame', x: left + 0.5, y: top + 0.5, width: right - left, height: bottom - top });
    add(svg, 'path', { class: 'corner', d: 'M357 422v7M357 1125v11h9M1889 1136h9' });
    add(svg, 'polyline', {
        points: '568,520 682,519 810,518 900,516 1000,518 1150,519 1240,518 1330,516 1420,515 1475,514 1560,515 1660,516 1767,517',
        fill: 'none', stroke: '#0a6e0a', 'stroke-width': 2
    });
    add(svg, 'polyline', {
        points: '568,1010 660,1011 900,1013 1340,1014 1600,1016 1767,1017',
        fill: 'none', stroke: '#0808b8', 'stroke-width': 4
    });
    add(svg, 'rect', { x: 680, y: top, width: 5, height: bottom - top, fill: '#a9a9a9' });
    add(svg, 'text', { class: 'axis-title', x: 1129, y: 1182 }, '时 间');
    add(svg, 'text', { class: 'axis-title', transform: 'translate(272 777) rotate(-90)' }, '组分浓度 (Area/High)');
}

// 谱图数据：波数, 强度
const spectrum = [
    [321, 697], [338, 670], [358, 697], [369, 893], [381, 1000], [392, 840], [403, 787], [411, 989], [422, 1281], [429, 1355],
    [434, 1366], [440, 1340], [447, 1228], [462, 936], [479, 750], [501, 665], [546, 628], [591, 660], [608, 681], [619, 803],
    [627, 1042], [632, 1140], [635, 1154], [638, 1135], [644, 989], [653, 776], [664, 670], [698, 638], [726, 628], [751, 702],
    [766, 675], [777, 766], [791, 803], [816, 766], [825, 830], [833, 989], [842, 1255], [850, 1403], [860, 1467], [866, 2052],
    [872, 3115], [877, 5772], [880, 6500], [883, 6756], [886, 6500], [888, 5772], [894, 3646], [900, 2317], [907, 1520],
    [916, 1095], [929, 909], [946, 830], [966, 734], [977, 744], [989, 819], [997, 909], [1019, 1031], [1028, 1361],
    [1036, 2052], [1045, 2743], [1050, 2940], [1053, 2966], [1056, 2940], [1061, 2796], [1070, 2080], [1074, 1972], [1079, 2105],
    [1087, 2690], [1092, 2955], [1096, 3025], [1098, 3035], [1104, 2929], [1111, 2477], [1120, 1946], [1130, 1467], [1140, 1175],
    [1154, 962], [1171, 830], [1188, 771], [1205, 771], [1222, 819], [1239, 925], [1252, 1122], [1261, 1361], [1270, 1733],
    [1275, 1830], [1279, 1855], [1283, 1820], [1288, 1653], [1297, 1334], [1312, 1138], [1329, 1058], [1351, 1116],
    [1365, 1228], [1391, 1499], [1413, 1706], [1427, 1999], [1436, 2371], [1444, 3115], [1453, 4018], [1457, 4231],
    [1464, 3965], [1471, 3115], [1477, 2690], [1492, 2211], [1503, 1733], [1515, 1414], [1531, 1148], [1548, 989],
    [1580, 845], [1599, 787], [1627, 787], [1655, 723], [1700, 723], [1717, 750], [1731, 835], [1751, 830], [1762, 734],
    [1779, 660], [1802, 638], [1907, 628], [2027, 574], [2159, 558], [2279, 596], [2398, 574], [2517, 617], [2610, 617],
    [2650, 660], [2670, 723], [2687, 925], [2703, 968], [2719, 899], [2736, 883], [2759, 819], [2780, 845], [2802, 989],
    [2822, 1308], [2838, 1627], [2849, 1946], [2859, 2637], [2867, 3089], [2873, 3131], [2882, 2955], [2890, 2740], [2899, 2663],
    [2907, 2902], [2916, 3700], [2922, 3870], [2926, 3896], [2929, 3850], [2934, 3487], [2942, 2849], [2950, 2265], [2959, 2052],
    [2970, 2116], [2979, 1892], [2989, 1520], [3003, 1148], [3021, 883], [3041, 776], [3068, 697], [3114, 617], [3220, 590],
    [3373, 596]
];

const baselines = [
    [[358, 697], [403, 792], [501, 665]],
    [[597, 654], [693, 643]],
    [[743, 654], [788, 750], [816, 766]],
    [[816, 766], [966, 740]],
    [[989, 803], [1074, 1972], [1188, 771]],
    [[1205, 771], [1329, 1058]],
    [[1354, 1120], [1581, 845]],
    [[2663, 692], [2730, 893]],
    [[2780, 845], [2902, 2663], [2971, 2052], [3064, 697]]
];

const peakLabels = [
    ['381-16', 2078, 1902], ['434-30', 2105, 1864], ['635-84', 2207, 1887], ['752-116', 2267, 1935], ['791-127', 2287, 1926],
    ['88', 2334, 1307], ['1053-201', 2420, 1699], ['1097-214', 2443, 1692], ['1280-268', 2536, 1813], ['1458-322', 2627, 1568],
    ['2704-766', 3260, 1906], ['2873-831', 3347, 1681], ['2927-852', 3375, 1603], ['2971-869', 3397, 1787]
];

function drawSpectrum() {
    const svg = document.getElementById('spectrumChart');
    const left = 2046, right = 3601, top = 1283, bottom = 1996;
    const px = v => 2137.5 + (v - 500) * 0.5096;
    const py = v => 1967 - (v - 500) * 0.10368;

    [[813.45, 965.9], [1353.96, 1580.64]].forEach(([a, b]) => {
        add(svg, 'rect', { class: 'band', x: px(a), y: top, width: px(b) - px(a), height: bottom - top });
        line(svg, 'band-edge', px(a), top, px(a), bottom);
        line(svg, 'band-edge', px(b), top, px(b), bottom);
    });
    for (let v = 500; v <= 7000; v += 500) {
        const y = Math.round(py(v)) + 0.5;
        line(svg, 'grid-h', left, y, right, y);
        add(svg, 'text', { class: 'end', x: 2033, y: y - 1 }, v);
    }
    for (let v = 500; v <= 3000; v += 500) {
        const x = Math.round(px(v));
        line(svg, 'grid-v', x, top, x, bottom);
        add(svg, 'text', { class: 'mid', x, y: 2020 }, v);
    }
    add(svg, 'rect', { class: 'frame', x: left + 0.5, y: top + 0.5, width: right - left, height: bottom - top });
    add(svg, 'path', { class: 'corner', d: 'M2045 1284v7M2045 1988v10h9M3593 1998h9' });

    // 平坦区域带有轻微噪声
    const pts = [];
    for (let i = 0; i < spectrum.length - 1; i++) {
        const [x1, y1] = spectrum[i];
        const [x2, y2] = spectrum[i + 1];
        const steps = Math.max(1, Math.round((x2 - x1) / 6));
        for (let k = 0; k < steps; k++) {
            const t = k / steps;
            const noise = steps > 2 ? Math.sin(i * 7.3 + k * 2.9) * 8 : 0;
            pts.push(px(x1 + (x2 - x1) * t).toFixed(1) + ',' + py(y1 + (y2 - y1) * t + noise).toFixed(1));
        }
    }
    pts.push(right + ',' + py(596));
    add(svg, 'polyline', { class: 'curve', points: pts.join(' ') });

    baselines.forEach(b => {
        add(svg, 'polyline', { class: 'baseline', points: b.map(p => px(p[0]) + ',' + py(p[1])).join(' ') });
    });

    add(svg, 'rect', { x: 2622, y: top, width: 6, height: bottom - top, fill: '#0000e0' });
    peakLabels.forEach(([text, x, y]) => {
        add(svg, 'text', { class: 'peak-label', transform: `translate(${x} ${y}) rotate(-90)` }, text);
    });
    add(svg, 'text', { class: 'note', x: 2344, y: 1320, style: 'fill: #008000' }, 'Peak at 885cm-1');
    add(svg, 'text', { class: 'note', x: 2638, y: 1311, style: 'fill: #a9a9a9' }, '官能团');
    add(svg, 'text', { class: 'note', x: 2638, y: 1338, style: 'fill: #a9a9a9' }, 'Aromatic ring');
    add(svg, 'text', { class: 'note', x: 2637, y: 1582, style: 'fill: #0000e0' }, 'Peak at 1459cm-1');

    [[2572, 1903], [2688, 1931]].forEach(([cx, cy]) => {
        add(svg, 'circle', { cx, cy, r: 8, fill: '#fbdcdc', stroke: '#000', 'stroke-width': 2 });
        add(svg, 'circle', { cx, cy, r: 4, fill: '#e85050' });
    });
    add(svg, 'text', { class: 'axis-title', x: 2825, y: 2043 }, '波数 (cm-1)');
    add(svg, 'text', { class: 'axis-title', transform: 'translate(1963 1639) rotate(-90)' }, '组分光谱（强度）');
}

// 时间线
function drawTimeline() {
    const svg = document.getElementById('timeline');
    for (let i = -1; i <= 11; i++) {
        const sec = String(Math.abs(i * 5)).padStart(2, '0');
        add(svg, 'text', { class: 'time-label', x: 3728, y: Math.round(1820.5 - i * 121.4) }, (i < 0 ? '-' : '') + '0:00:' + sec);
    }
    line(svg, 'frame', 3740, 417.5, 3840, 417.5);
    add(svg, 'rect', { x: 3738, y: 418, width: 4, height: 1625, fill: '#ee9614' });
    add(svg, 'rect', { x: 3741, y: 418, width: 1, height: 1625, fill: '#7a4a10' });
    add(svg, 'rect', { x: 3741, y: 2041, width: 99, height: 4, fill: '#96502c' });
    for (let y = 556; y < 1600; y += 316) {
        add(svg, 'rect', { x: 3741, y: y - 2, width: 51, height: 4, fill: '#808080' });
    }
    add(svg, 'rect', { x: 3741, y: 1817, width: 51, height: 6, fill: '#ffa50a' });
}

drawTrend();
drawSpectrum();
drawTimeline();
```
